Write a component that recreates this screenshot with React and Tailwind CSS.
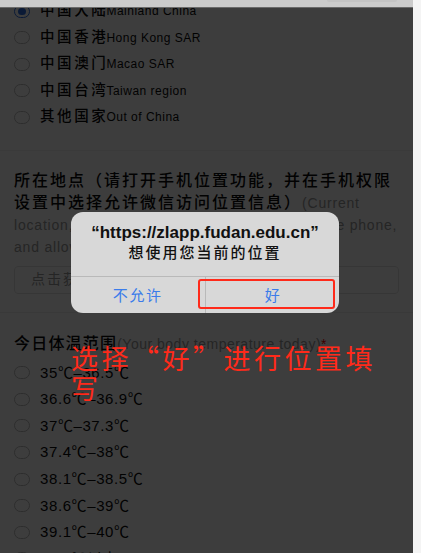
import React from 'react'

const SANS = "font-['Liberation_Sans','Noto_Sans_CJK_SC',sans-serif]"

const REGIONS = [
  { zh: '中国大陆', en: 'Mainland China', checked: true },
  { zh: '中国香港', en: 'Hong Kong SAR' },
  { zh: '中国澳门', en: 'Macao SAR' },
  { zh: '中国台湾', en: 'Taiwan region' },
  { zh: '其他国家', en: 'Out of China' },
]

const TEMPS = [
  '35℃–36.5℃',
  '36.6℃–36.9℃',
  '37℃–37.3℃',
  '37.4℃–38℃',
  '38.1℃–38.5℃',
  '38.6℃–39℃',
  '39.1℃–40℃',
  '40.1℃以上',
]

function Radio({ checked }) {
  return (
    <span
      className={`flex items-center justify-center w-4 h-[13px] rounded-full border shrink-0 ${
        checked ? 'border-[#2f6fe0]' : 'border-[#bdbdbd]'
      }`}
    >
      {checked && <span className="w-2 h-[7px] rounded-full bg-[#2f6fe0]" />}
    </span>
  )
}

export default function App() {
  return (
    <div className={`flex w-[421px] h-[553px] bg-[#f4f4f4] ${SANS}`}>
      <div className="relative w-[413px] h-[553px] overflow-hidden flex flex-col">
        {/* top bar */}
        <div className="relative h-2 shrink-0 bg-[#cbcbcb] border-b border-[#6a6a6a]">
          <div className="absolute left-[327px] top-0 w-[70px] h-[2px] rounded-b bg-[#c3c3c3]" />
        </div>

        {/* page content under the dim layer */}
        <div className="relative flex-1 bg-white overflow-hidden">
          <div className="flex flex-col -mt-[10px]">
            {/* region options */}
            <div className="pb-[19px] border-b border-[#f0f0f0]">
              {REGIONS.map(r => (
                <div key={r.en} className="flex items-center h-[26.5px] pl-[14px]">
                  <Radio checked={r.checked} />
                  <span className="ml-[10px] text-[14.5px] tracking-[2.6px] font-medium text-[#0a0a0a]">{r.zh}</span>
                  <span className="-ml-[2px] text-[12px] tracking-[0.5px] text-[#0a0a0a]">{r.en}</span>
                </div>
              ))}
            </div>

            {/* location */}
            <div className="px-[14px] pt-[19px] pb-[18px] border-b border-[#eeeeee]">
              <p className="w-[384px] text-[16px] leading-[22px] text-[#0a0a0a]">
                <span className="tracking-[2px] font-medium">所在地点（请打开手机位置功能，并在手机权限设置中选择允许微信访问位置信息）</span>
                <span className="text-[14px] tracking-[0.8px] text-[#9a9a9a]">
                  (Current location, please turn on the GPS of your mobile phone, and allow WeChat to access location)
                </span>
              </p>
              <div className="mt-2 h-[28px] flex items-center px-4 border border-[#e3e3e3] rounded bg-white text-[14px] tracking-[2px] text-[#9a9a9a]">
                点击获取地理位置
              </div>
            </div>

            {/* temperature */}
            <div className="pt-[20px]">
              <div className="px-[14px] text-[16px] leading-[22px] text-[#0a0a0a]">
                <span className="tracking-[1.2px] font-medium">今日体温范围</span>
                <span className="text-[14px] tracking-[0.5px] text-[#9a9a9a]">(Your body temperature today)</span>
                <span className="text-[#ff0000] text-[14px]">*</span>
              </div>
              <div className="mt-[5px]">
                {TEMPS.map(t => (
                  <div key={t} className="flex items-center h-[26.6px] pl-[14px]">
                    <Radio />
                    <span className="ml-[10px] text-[15px] tracking-[0.6px] text-[#0a0a0a]">{t}</span>
                  </div>
                ))}
              </div>
            </div>
          </div>

          {/* dim layer */}
          <div className="absolute inset-0 bg-black/[0.76]" />
        </div>

        {/* location permission alert */}
        <div className="absolute left-[71px] top-[212px] w-[268px] h-[101px] rounded-[12px] bg-[#d8d8d8] flex flex-col overflow-hidden">
          <div className="flex flex-col items-center pt-[11px] pb-[13px] border-b border-[#b9b9b9] text-[#111]">
            <div className="text-[17px] leading-[20px] font-semibold">“https://zlapp.fudan.edu.cn”</div>
            <div className="text-[15px] leading-[20px] tracking-[2px] font-medium">想使用您当前的位置</div>
          </div>
          <div className="flex flex-1">
            <div className="flex-1 flex items-center justify-center pt-[2px] border-r border-[#b9b9b9] text-[15px] tracking-[1.7px] text-[#3b7cea]">
              不允许
            </div>
            <div className="flex-1 flex items-center justify-center pt-[2px] text-[15px] text-[#3b7cea]">好</div>
          </div>
        </div>

        {/* annotation */}
        <div className="absolute left-[198px] top-[279px] w-[137px] h-[30px] border-2 border-[#ff2a1a] rounded-[3px]" />
        <div className="absolute left-[71px] top-[343px] w-[325px] font-['Noto_Sans_CJK_SC',sans-serif] text-[27px] leading-[30px] tracking-[3.5px] text-[#ff2a1a]">
          选择“好”进行位置填写
        </div>
      </div>
      <div className="w-2 shrink-0 bg-[#f4f4f4]" />
    </div>
  )
}
